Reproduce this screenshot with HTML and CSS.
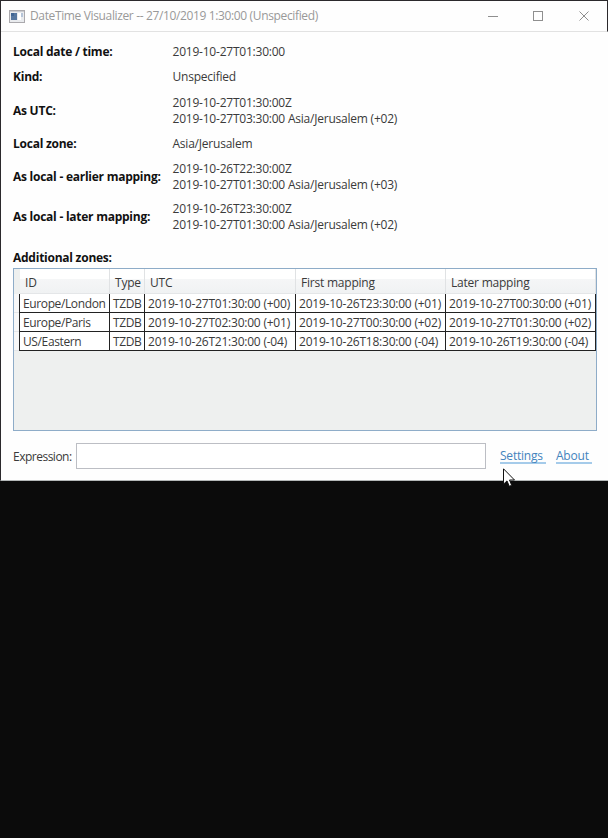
FILE: index.html
```html
<!DOCTYPE html>
<html lang="en">
<head>
<meta charset="utf-8">
<title>DateTime Visualizer</title>
<link rel="stylesheet" href="styles.css">
</head>
<body>
<main class="window">
  <header class="titlebar">
    <svg class="app-icon" width="16" height="13" viewBox="0 0 16 13"><rect x=".5" y=".5" width="15" height="12" fill="#e9ebee" stroke="#aaa9ad"/><path d="M1 1.5H15" stroke="#c9cbd0"/><rect x="2" y="3" width="6" height="7" fill="#5878a0"/><path d="M2 3H5V6H2Z" fill="#416694"/><rect x="9" y="3" width="3" height="7" fill="#fff"/><rect x="12" y="3" width="2" height="4" fill="#b5c4d8"/></svg>
    <span class="title">DateTime Visualizer -- 27/10/2019 1:30:00 (Unspecified)</span>
    <svg class="controls" width="104" height="12" viewBox="0 0 104 12" fill="none" stroke="#8f8f8f"><path d="M0 6.5H10"/><rect x="45.5" y="1.5" width="9" height="9"/><path d="M91.500 1.500L100.500 10.500M100.500 1.500L91.500 10.500"/></svg>
  </header>
  <section class="content">
    <dl class="details">
      <dt>Local date / time:</dt><dd>2019-10-27T01:30:00</dd>
      <dt>Kind:</dt><dd>Unspecified</dd>
      <dt>As UTC:</dt><dd>2019-10-27T01:30:00Z<br>2019-10-27T03:30:00 Asia/Jerusalem (+02)</dd>
      <dt>Local zone:</dt><dd>Asia/Jerusalem</dd>
      <dt>As local - earlier mapping:</dt><dd>2019-10-26T22:30:00Z<br>2019-10-27T01:30:00 Asia/Jerusalem (+03)</dd>
      <dt>As local - later mapping:</dt><dd>2019-10-26T23:30:00Z<br>2019-10-27T01:30:00 Asia/Jerusalem (+02)</dd>
    </dl>
    <h2 class="heading">Additional zones:</h2>
    <div class="grid-panel">
      <div class="row head"><i></i><span>ID</span><span>Type</span><span>UTC</span><span>First mapping</span><span>Later mapping</span></div>
      <div class="row"><i></i><span class="name">Europe/London</span><span class="name">TZDB</span><span>2019-10-27T01:30:00 (+00)</span><span>2019-10-26T23:30:00 (+01)</span><span>2019-10-27T00:30:00 (+01)</span></div>
      <div class="row"><i></i><span class="name">Europe/Paris</span><span class="name">TZDB</span><span>2019-10-27T02:30:00 (+01)</span><span>2019-10-27T00:30:00 (+02)</span><span>2019-10-27T01:30:00 (+02)</span></div>
      <div class="row"><i></i><span class="name">US/Eastern</span><span class="name">TZDB</span><span>2019-10-26T21:30:00 (-04)</span><span>2019-10-26T18:30:00 (-04)</span><span>2019-10-26T19:30:00 (-04)</span></div>
    </div>
    <footer class="footer">
      <label for="expr">Expression:</label>
      <input id="expr" class="expr" type="text">
      <a class="settings">Settings&nbsp;</a>
      <a class="about">About&nbsp;</a>
    </footer>
  </section>
</main>
<svg class="cursor" width="13" height="20" viewBox="0 0 13 20"><path d="M.5 .8V16.200L4 12.900L6.300 18.300L8.700 17.300L6.500 12H11.500Z" fill="#fff" stroke="#111"/></svg>
</body>
</html>
```
FILE: styles.css
```css
* { box-sizing: border-box; }
body {
  margin: 0;
  height: 838px;
  overflow: hidden;
  background: #0b0b0b;
  font: 12px/16px "Open Sans", "Noto Sans", sans-serif;
  letter-spacing: -0.22px;
  color: #3a3a3a;
}
.window {
  height: 481px;
  background: #fefefe;
  border-top: 1px solid #2b292c;
  border-left: 1px solid #2b292c;
  border-bottom: 1px solid #b4b8b8;
}
.titlebar {
  display: flex;
  align-items: center;
  height: 31px;
  padding: 0 15px 0 8px;
  border-bottom: 1px solid #e2e2e2;
  border-right: 1px solid #2b292c;
}
.app-icon { margin-right: 5px; }
.title { flex: 1; color: #999; white-space: nowrap; letter-spacing: -0.36px; }
.content { padding: 7px 11px 0 12px; }
.details {
  display: grid;
  grid-template-columns: 159.5px 1fr;
  grid-template-rows: 25px 26px 41px 25px 41px 40px;
  align-items: center;
  margin: 0;
}
dt, .heading { font-weight: 700; color: #111; white-space: nowrap; letter-spacing: -0.25px; }
dd { margin: 0; }
.heading { margin: 13px 0 2px; font-size: 12px; line-height: 16px; }
.grid-panel {
  height: 163px;
  border: 1px solid #8eacc8;
  background: #eef0ef;
}
.row {
  display: grid;
  grid-template-columns: 6px 90px 35px 151px 150px 150px;
  grid-template-rows: 100%;
  height: 19px;
  line-height: 19px;
  white-space: nowrap;
}
.row i { background: #f8f8f8; border-bottom: 1px solid #e4e6e8; }
.row span {
  padding-left: 3px;
  background: #fff;
  border-right: 1px solid #222;
  border-bottom: 1px solid #222;
}
.row .name { letter-spacing: -0.38px; }
.row i + span { box-shadow: -1px 0 #222; }
.head { height: 25px; line-height: 27px; }
.head i { background: #eef0ef; border: 0; }
.head span {
  padding-left: 5px;
  background: linear-gradient(#fff 0 40%, #f5f6f7 40%, #f0f2f3);
  border-right: 1px solid #e0e2e4;
  border-bottom: 1px solid #e4e6e8;
}
.head i + span { box-shadow: none; }
.footer { display: flex; align-items: center; margin-top: 12px; height: 26px; }
.footer label { width: 63px; padding-top: 1px; letter-spacing: -0.5px; }
.expr {
  width: 410px;
  height: 26px;
  border: 1px solid #bcbec4;
  background: #fff;
  outline: 0;
}
.footer a {
  color: #4384bd;
  margin-top: 1px;
  border-bottom: 2px solid #a5cbea;
  line-height: 12px;
}
.footer .settings { margin-left: 14px; width: 46px; }
.footer .about { margin-left: 10px; width: 36px; }
.cursor { position: absolute; left: 503px; top: 468px; }
```
